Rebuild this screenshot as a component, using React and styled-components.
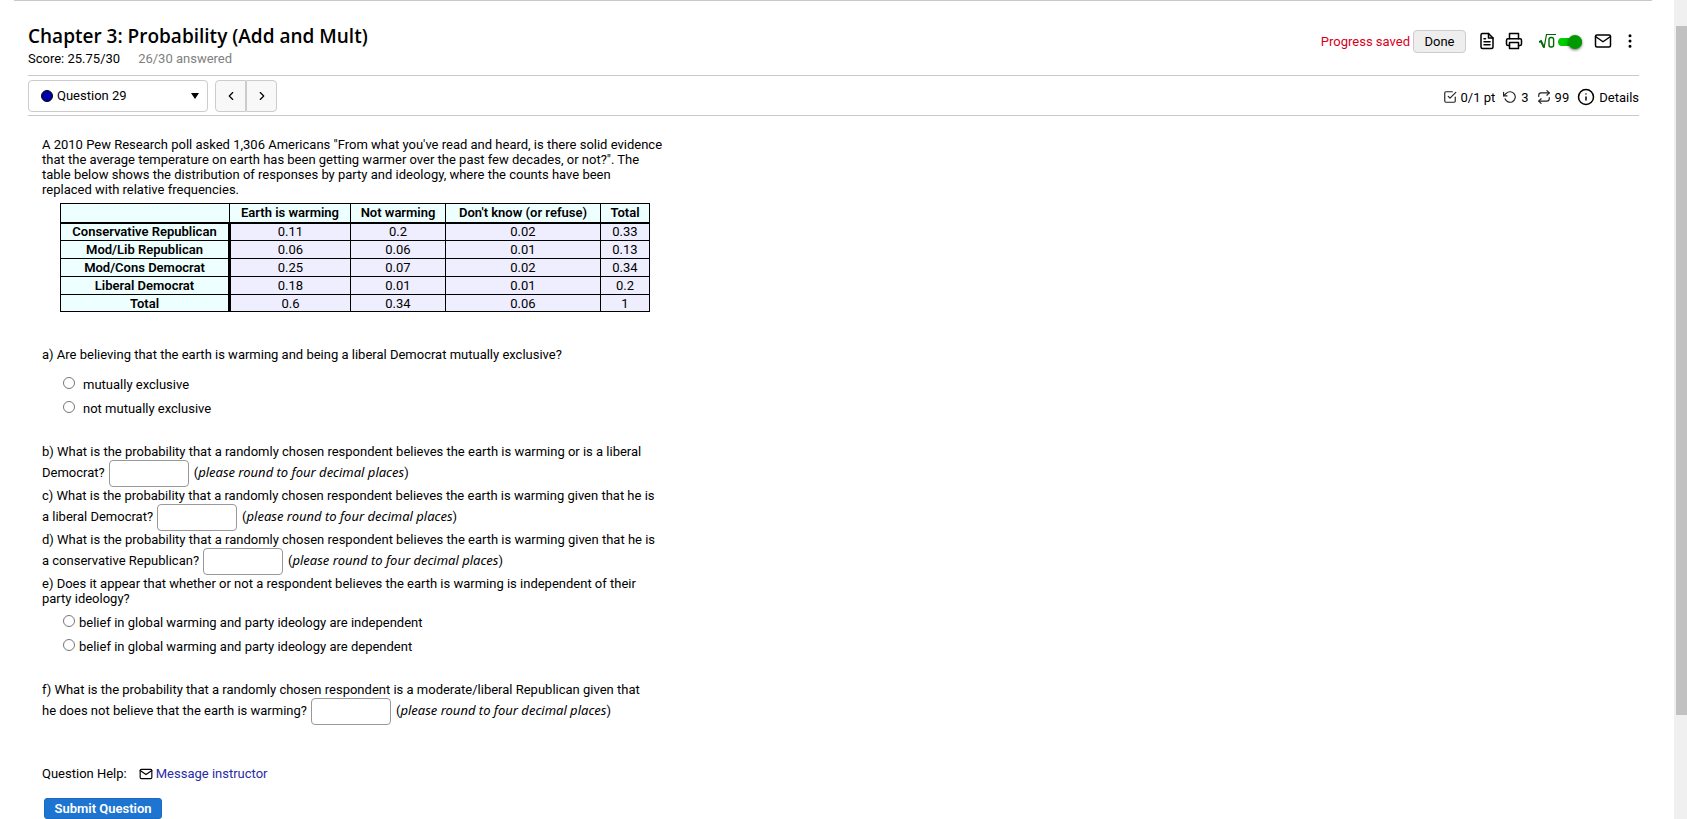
import React from 'react';
import styled, { createGlobalStyle } from 'styled-components';
import { FiFileText, FiPrinter, FiMail, FiCheckSquare, FiRotateCcw, FiRepeat, FiInfo, FiMoreVertical, FiChevronLeft, FiChevronRight } from 'react-icons/fi';

const GlobalStyle = createGlobalStyle`
  *, *::before, *::after { box-sizing: border-box; }
  body { margin: 0; background: #fff; color: #000; font: 13px/15px Roboto, "Liberation Sans", sans-serif; overflow: hidden; }
  button, input, select { font: inherit; color: inherit; }
`;

const Page = styled.div`
  display: flex;
  min-height: 100vh;
`;
const Main = styled.main`
  flex: 1;
  min-width: 0;
  margin: 0 22px 0 14px;
  padding: 0 13px 0 14px;
  border-top: 1px solid #c6cacd;
`;
const ScrollRail = styled.div`
  width: 13px;
  padding: 26px 0 0 2px;
  background: #f0f0f0;
`;
const ScrollThumb = styled.div`
  height: 689px;
  background: #c1c1c1;
`;

const Header = styled.header`
  display: flex;
  justify-content: space-between;
  height: 75px;
  padding-top: 23px;
  border-bottom: 1px solid #c6cacd;
`;
const Title = styled.h1`
  margin: 0;
  font: 600 19px/25px "Open Sans", "Liberation Sans", sans-serif;
`;
const Score = styled.div`
  display: flex;
  gap: 18px;
  padding-top: 2px;
`;
const Muted = styled.span`
  color: #808080;
`;
const Tools = styled.div`
  display: flex;
  align-items: center;
  height: 34px;
`;
const Saved = styled.span`
  margin-right: 3px;
  color: #d9001b;
`;
const DoneButton = styled.button`
  width: 53px;
  height: 23px;
  margin-right: 12px;
  padding: 0;
  border: 1px solid #ccc;
  border-radius: 4px;
  background: #eee;
`;
const IconButton = styled.button`
  display: flex;
  margin-right: ${p => p.$gap || 0}px;
  padding: 0;
  border: 0;
  background: none;
`;
const MathLabel = styled.label`
  display: flex;
  align-items: center;
  margin-right: 12px;
`;
const Switch = styled.input`
  appearance: none;
  display: flex;
  align-items: center;
  justify-content: flex-end;
  width: 24px;
  height: 8px;
  margin: 2px 0 0 2px;
  border-radius: 4px;
  background: #0c0;
  &::after {
    content: "";
    width: 14px;
    height: 14px;
    border-radius: 50%;
    background: #090;
    box-shadow: 0 1px 3px rgba(0, 0, 0, 0.6);
  }
`;

const Bar = styled.div`
  display: flex;
  justify-content: space-between;
  align-items: center;
  height: 40px;
  border-bottom: 1px solid #c6cacd;
`;
const Nav = styled.nav`
  display: flex;
  align-items: center;
`;
const Picker = styled.label`
  display: flex;
  align-items: center;
  width: 180px;
  height: 32px;
  margin-right: 7px;
  padding: 0 8px 0 12px;
  border: 1px solid #ccc;
  border-radius: 4px;
`;
const Dot = styled.i`
  width: 12px;
  height: 12px;
  margin-right: 4px;
  border: 1px solid #000;
  border-radius: 50%;
  background: #00a;
`;
const PickerSelect = styled.select`
  flex: 1;
  appearance: none;
  padding: 0;
  border: 0;
  background: none;
`;
const Step = styled.button`
  display: flex;
  align-items: center;
  justify-content: center;
  width: 31px;
  height: 32px;
  padding: 0;
  border: 1px solid #ccc;
  border-radius: ${p => (p.$last ? '0 4px 4px 0' : '4px 0 0 4px')};
  background: #f8f8f8;
`;
const Stats = styled.div`
  display: flex;
  align-items: center;
  gap: 8px;
  padding-top: 3px;
`;
const Stat = styled.span`
  display: flex;
  align-items: center;
  gap: 4px;
  svg { color: #222; }
`;
const DetailsButton = styled.button`
  display: flex;
  align-items: center;
  gap: 4px;
  padding: 0;
  border: 0;
  background: none;
`;

const Question = styled.section`
  padding: 21px 14px 0;
`;
const Text = styled.p`
  margin: 0;
`;
const FreqTable = styled.table`
  width: 590px;
  margin: 6px 0 35px 18px;
  border-collapse: collapse;
  table-layout: fixed;
  text-align: center;
  background: #eef;
  th, td { height: 18px; padding: 0; border: 1px solid #000; line-height: 15px; }
  th { background: #eff; font-weight: 600; }
  thead th { height: 19px; border-bottom-width: 2px; }
  tbody th { border-right-width: 3px; }
  tbody tr:last-child > * { height: 17px; }
`;
const Col = styled.col`
  width: ${p => p.$w}px;
`;
const Choices = styled.div`
  display: flex;
  flex-direction: column;
  gap: 9px;
  padding: ${p => p.$top}px 0 28px 21px;
`;
const Choice = styled.label`
  display: flex;
  align-items: flex-start;
  gap: ${p => p.$gap}px;
`;
const Radio = styled.input`
  width: 12px;
  height: 12px;
  margin: 0 1px 0 0;
`;
const Line = styled.label`
  display: flex;
  align-items: center;
  height: 29px;
  padding-bottom: 2px;
`;
const Answer = styled.input`
  flex: none;
  width: 80px;
  height: 27px;
  margin: 1px 5px 0 4px;
  padding: 0 4px;
  border: 1px solid #999;
  border-radius: 4px;
`;
const Hint = styled.em`
  font-family: "Noto Sans", sans-serif;
`;
const Help = styled.div`
  display: flex;
  align-items: center;
  padding-top: 40px;
`;
const HelpLink = styled.a`
  display: flex;
  align-items: center;
  gap: 3px;
  margin-left: 12px;
  color: #2a2aa5;
  text-decoration: none;
  svg { color: #000; }
`;
const Submit = styled.button`
  width: 118px;
  height: 21px;
  margin: 17px 0 0 2px;
  padding: 0;
  border: 1px solid #1a6bc8;
  border-radius: 3px;
  background: #1e74d1;
  color: #fff;
  font-weight: 600;
`;

const heads = ['Earth is warming', 'Not warming', "Don't know (or refuse)", 'Total'];
const rows = [
  ['Conservative Republican', '0.11', '0.2', '0.02', '0.33'],
  ['Mod/Lib Republican', '0.06', '0.06', '0.01', '0.13'],
  ['Mod/Cons Democrat', '0.25', '0.07', '0.02', '0.34'],
  ['Liberal Democrat', '0.18', '0.01', '0.01', '0.2'],
  ['Total', '0.6', '0.34', '0.06', '1'],
];

const Numeric = ({ lead }) => (
  <Line>
    {lead}
    <Answer type="text" />
    <span>(<Hint>please round to four decimal places</Hint>)</span>
  </Line>
);

const RadioGroup = ({ name, options, gap, top }) => (
  <Choices $top={top}>
    {options.map(o => (
      <Choice key={o} $gap={gap}><Radio type="radio" name={name} />{o}</Choice>
    ))}
  </Choices>
);

const RootIcon = () => (
  <svg width="17" height="16" viewBox="0 0 17 16" fill="none" stroke="#060" aria-hidden="true">
    <path d="M0 9 L2 8 L5 14.5" strokeWidth="2" />
    <path d="M5 15 L7.5 1.5 H17" strokeWidth="1.2" />
    <rect x="10" y="4.5" width="4.6" height="9.5" rx="2" strokeWidth="1.4" />
  </svg>
);

export default function App() {
  return (
    <Page>
      <GlobalStyle />
      <Main>
        <Header>
          <div>
            <Title>Chapter 3: Probability (Add and Mult)</Title>
            <Score><span>Score: 25.75/30</span><Muted>26/30 answered</Muted></Score>
          </div>
          <Tools>
            <Saved>Progress saved</Saved>
            <DoneButton>Done</DoneButton>
            <IconButton $gap={9} aria-label="Text"><FiFileText size={18} /></IconButton>
            <IconButton $gap={16} aria-label="Print"><FiPrinter size={18} /></IconButton>
            <MathLabel aria-label="Math entry"><RootIcon /><Switch type="checkbox" role="switch" defaultChecked /></MathLabel>
            <IconButton $gap={9} aria-label="Messages"><FiMail size={18} /></IconButton>
            <IconButton aria-label="More"><FiMoreVertical size={18} /></IconButton>
          </Tools>
        </Header>
        <Bar>
          <Nav>
            <Picker>
              <Dot />
              <PickerSelect aria-label="Question"><option>Question 29</option></PickerSelect>
              <svg width="8" height="6" aria-hidden="true"><path d="M0 0H8L4 6Z" /></svg>
            </Picker>
            <Step aria-label="Previous"><FiChevronLeft size={14} /></Step>
            <Step $last aria-label="Next"><FiChevronRight size={14} /></Step>
          </Nav>
          <Stats>
            <Stat><FiCheckSquare size={14} />0/1 pt</Stat>
            <Stat><FiRotateCcw size={14} />3</Stat>
            <Stat><FiRepeat size={14} />99</Stat>
            <DetailsButton><FiInfo size={18} />Details</DetailsButton>
          </Stats>
        </Bar>
        <Question>
          <Text>
            A 2010 Pew Research poll asked 1,306 Americans "From what you've read and heard, is there solid evidence<br />
            that the average temperature on earth has been getting warmer over the past few decades, or not?". The<br />
            table below shows the distribution of responses by party and ideology, where the counts have been<br />
            replaced with relative frequencies.
          </Text>
          <FreqTable>
            <colgroup><Col $w={169} /><Col $w={121} /><Col $w={95} /><Col $w={155} /><Col $w={49} /></colgroup>
            <thead>
              <tr><th />{heads.map(h => <th key={h} scope="col">{h}</th>)}</tr>
            </thead>
            <tbody>
              {rows.map(([head, ...cells]) => (
                <tr key={head}><th scope="row">{head}</th>{cells.map((c, i) => <td key={i}>{c}</td>)}</tr>
              ))}
            </tbody>
          </FreqTable>
          <Text>a) Are believing that the earth is warming and being a liberal Democrat mutually exclusive?</Text>
          <RadioGroup name="exclusive" gap={7} top={15} options={['mutually exclusive', 'not mutually exclusive']} />
          <Text>b) What is the probability that a randomly chosen respondent believes the earth is warming or is a liberal</Text>
          <Numeric lead="Democrat?" />
          <Text>c) What is the probability that a randomly chosen respondent believes the earth is warming given that he is</Text>
          <Numeric lead="a liberal Democrat?" />
          <Text>d) What is the probability that a randomly chosen respondent believes the earth is warming given that he is</Text>
          <Numeric lead="a conservative Republican?" />
          <Text>
            e) Does it appear that whether or not a respondent believes the earth is warming is independent of their<br />
            party ideology?
          </Text>
          <RadioGroup name="independent" gap={3} top={9} options={['belief in global warming and party ideology are independent', 'belief in global warming and party ideology are dependent']} />
          <Text>f) What is the probability that a randomly chosen respondent is a moderate/liberal Republican given that</Text>
          <Numeric lead="he does not believe that the earth is warming?" />
          <Help>
            Question Help:
            <HelpLink href="#message"><FiMail size={14} />Message instructor</HelpLink>
          </Help>
          <Submit>Submit Question</Submit>
        </Question>
      </Main>
      <ScrollRail><ScrollThumb /></ScrollRail>
    </Page>
  );
}
